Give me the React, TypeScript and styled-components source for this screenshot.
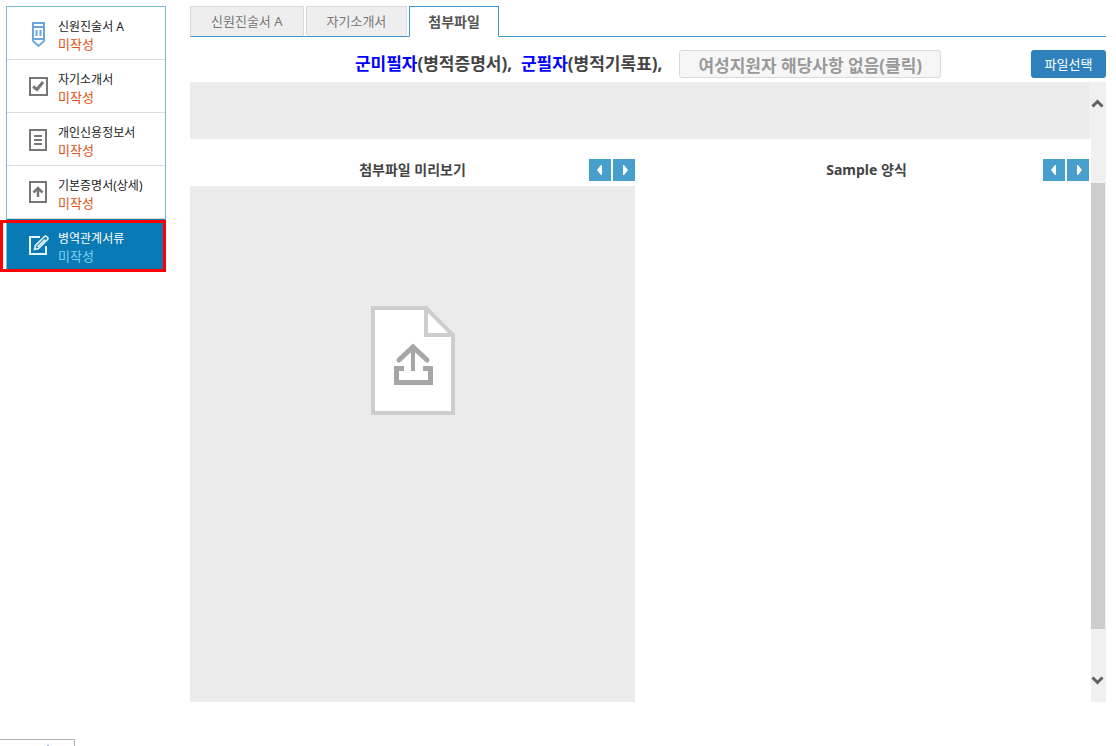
import React from 'react';
import styled, { createGlobalStyle } from 'styled-components';

const GlobalStyle = createGlobalStyle`
  * { box-sizing: border-box; }
  body {
    margin: 0;
    background: #fff;
    color: #444;
    font-family: 'Noto Sans', 'Noto Sans CJK KR', sans-serif;
    font-size: 13px;
    line-height: 18px;
  }
  button { font-family: inherit; cursor: pointer; }
`;

const Page = styled.div`
  display: flex;
  align-items: flex-start;
  gap: 24px;
  padding: 6px 10px 0 6px;
`;

const Sidebar = styled.nav`
  flex: 0 0 160px;
  border: 1px solid #7bbbd9;
`;

const StepLink = styled.a<{ $active?: boolean }>`
  position: relative;
  display: flex;
  align-items: center;
  height: ${p => (p.$active ? 52 : 53)}px;
  padding-left: 21px;
  gap: 9px;
  text-decoration: none;
  color: ${p => (p.$active ? '#fff' : '#222')};
  background: ${p => (p.$active ? '#0a7ab5' : '#fff')};
  border-bottom: ${p => (p.$active ? '0' : '1px solid #dcdcdc')};

  &::after {
    content: ${p => (p.$active ? "''" : 'none')};
    position: absolute;
    inset: 1px -1px -1px -7px;
    border: 3px solid #f00;
  }
`;

const StepIcon = styled.svg`
  flex: none;
  width: 21px;
  height: 28px;
`;

const StepText = styled.span`
  display: flex;
  flex-direction: column;
  padding-top: 5px;
  white-space: nowrap;
`;

const StepName = styled.span`
  font-size: 12px;
`;

const StepStatus = styled.span<{ $active?: boolean }>`
  font-size: 13px;
  line-height: 17px;
  color: ${p => (p.$active ? '#7fd3ee' : '#e2500f')};
`;

const Main = styled.main`
  flex: 1;
  min-width: 0;
`;

const Tabs = styled.div`
  display: flex;
  gap: 2px;
  height: 31px;
  border-bottom: 1px solid #4096cb;
`;

const Tab = styled.button<{ $selected?: boolean }>`
  height: 31px;
  padding: 0 ${p => (p.$selected ? 18 : 20)}px 2px;
  border: 1px solid ${p => (p.$selected ? '#4096cb' : '#d9d9d9')};
  border-bottom-color: ${p => (p.$selected ? '#fff' : '#4096cb')};
  background: ${p => (p.$selected ? '#fff' : '#eee')};
  color: ${p => (p.$selected ? '#555' : '#777')};
  font-size: ${p => (p.$selected ? 14 : 13)}px;
  font-weight: ${p => (p.$selected ? 700 : 400)};
`;

const Toolbar = styled.div`
  display: flex;
  align-items: center;
  height: 45px;
  padding-top: 9px;
`;

const Guide = styled.div`
  flex: 1;
  display: flex;
  align-items: center;
  justify-content: center;
  padding-left: 75px;
  font-size: 17px;
  font-weight: 700;
  line-height: 30px;
  white-space: pre;
`;

const Blue = styled.span`
  color: #00f;
`;

const NotApplicable = styled.button`
  height: 28px;
  margin-left: 17px;
  padding: 0 18px;
  border: 1px solid #d9d9d9;
  border-radius: 3px;
  background: #f6f6f6;
  color: #999;
  font-size: 17px;
  font-weight: 700;
`;

const FileButton = styled.button`
  width: 75px;
  height: 28px;
  padding: 0 0 2px;
  border: 0;
  border-radius: 3px;
  background: #2e81bd;
  color: #fff;
  font-size: 13px;
`;

const Viewer = styled.div`
  display: flex;
  gap: 2px;
`;

const ViewerBody = styled.div`
  flex: 1;
  min-width: 0;
`;

const FileList = styled.div`
  height: 57px;
  background: #ebebeb;
  border-right: 0;
  box-shadow: 2px 0 0 #f0f0f0;
`;

const Columns = styled.div`
  display: grid;
  grid-template-columns: 1fr 1fr;
  gap: 9px;
`;

const PanelHead = styled.div`
  display: grid;
  grid-template-columns: 46px 1fr 46px;
  align-items: center;
  height: 47px;
  padding-top: 15px;
`;

const PanelTitle = styled.h2`
  grid-column: 2;
  margin: 0;
  text-align: center;
  font-size: 14px;
  font-weight: 700;
  line-height: 20px;
`;

const Pager = styled.div`
  display: flex;
  gap: 2px;
`;

const PageButton = styled.button`
  display: block;
  width: 22px;
  height: 22px;
  padding: 0;
  border: 0;
  background: #479fcd;

  svg { display: block; }
`;

const Preview = styled.div<{ $blank?: boolean }>`
  display: flex;
  justify-content: center;
  height: 516px;
  padding-top: 120px;
  background: ${p => (p.$blank ? '#fff' : '#ebebeb')};
`;

const Scrollbar = styled.div`
  flex: 0 0 15px;
  display: flex;
  flex-direction: column;
  padding: 14px 0;
  background: #f0f0f0;
`;

const ScrollArrow = styled.button`
  display: block;
  height: 15px;
  padding: 0;
  border: 0;
  background: transparent;

  svg { display: block; }
`;

const ScrollThumb = styled.div`
  width: 14px;
  height: 446px;
  margin: 72px 0 44px;
  background: #cdcdcd;
`;

const StatusTip = styled.div`
  width: 75px;
  height: 7px;
  margin-top: 37px;
  padding-left: 47px;
  padding-top: 5px;
  border: 1px solid #b2b2b2;
  border-width: 1px 1px 0 0;
`;

const TipMark = styled.div`
  width: 2px;
  height: 1px;
  background: #8f9fd8;
`;

const icons = {
  pencil: (
    <g fill="none" stroke="#6ba5e0" strokeWidth="2">
      <path d="M5 4h11v16H5zM5 8h11" />
      <path d="M8.500 11v6M12.500 11v6" />
      <path d="M5 20v2l5.500 5 5.500-5v-2" strokeWidth="1.800" />
    </g>
  ),
  check: (
    <g fill="none" stroke="#777">
      <path d="M2 6h17v17H2z" strokeWidth="2" />
      <path d="M5 14.500l4 3 6-7.500" strokeWidth="3" />
    </g>
  ),
  lines: (
    <g fill="none" stroke="#777" strokeWidth="2">
      <path d="M2 5h16v20H2zM6 11h8M6 15h8M6 19h8" />
    </g>
  ),
  upload: (
    <g fill="none" stroke="#777" strokeWidth="2">
      <path d="M2 4h16v20H2z" />
      <path d="M10 19v-8M5.500 14.500L10 10l4.500 4.500" strokeWidth="2.500" />
    </g>
  ),
  edit: (
    <g fill="none" stroke="#e8f6ff" strokeWidth="2">
      <path d="M12 6H2v17h16v-8" />
      <path d="M6.500 18.500l1-4L16.500 5.500q1-1 2 0l1 1q1 1 0 2L10.500 17.500zM9.500 16l7.500-7.500" strokeWidth="1.600" />
    </g>
  ),
};

const steps: { name: string; icon: keyof typeof icons; active?: boolean }[] = [
  { name: '신원진술서 A', icon: 'pencil' },
  { name: '자기소개서', icon: 'check' },
  { name: '개인신용정보서', icon: 'lines' },
  { name: '기본증명서(상세)', icon: 'upload' },
  { name: '병역관계서류', icon: 'edit', active: true },
];

function PagerButtons() {
  return (
    <Pager>
      <PageButton aria-label="이전">
        <svg width="22" height="22"><path d="M13 6v10h-1l-4-5 4-5z" fill="#fff" /></svg>
      </PageButton>
      <PageButton aria-label="다음">
        <svg width="22" height="22"><path d="M10 6v10h1l4-5-4-5z" fill="#fff" /></svg>
      </PageButton>
    </Pager>
  );
}

function UploadPicture() {
  return (
    <svg width="84" height="109" viewBox="0 0 84 109" fill="none">
      <path d="M2 2h53l27 27v78H2z" fill="#fff" stroke="#cdcdcd" strokeWidth="4" />
      <path d="M55 2v27h27" stroke="#cdcdcd" strokeWidth="4" />
      <path d="M33 62.500h-7.500v14h34v-14H52" stroke="#a6a6a6" strokeWidth="5" />
      <path d="M42 65V42" stroke="#a6a6a6" strokeWidth="4" />
      <path d="M28 54l14-13 14 13" stroke="#a6a6a6" strokeWidth="5" strokeLinecap="round" />
    </svg>
  );
}

export default function App() {
  return (
    <>
      <GlobalStyle />
      <Page>
        <Sidebar>
          {steps.map(s => (
            <StepLink key={s.name} href="#" $active={s.active}>
              <StepIcon viewBox="0 0 21 28">{icons[s.icon]}</StepIcon>
              <StepText>
                <StepName>{s.name}</StepName>
                <StepStatus $active={s.active}>미작성</StepStatus>
              </StepText>
            </StepLink>
          ))}
        </Sidebar>
        <Main>
          <Tabs role="tablist">
            <Tab role="tab">신원진술서 A</Tab>
            <Tab role="tab">자기소개서</Tab>
            <Tab role="tab" aria-selected $selected>첨부파일</Tab>
          </Tabs>
          <Toolbar>
            <Guide>
              <Blue>군미필자</Blue>(병적증명서),{'  '}<Blue>군필자</Blue>(병적기록표),
              <NotApplicable>여성지원자 해당사항 없음(클릭)</NotApplicable>
            </Guide>
            <FileButton>파일선택</FileButton>
          </Toolbar>
          <Viewer>
            <ViewerBody>
              <FileList />
              <Columns>
                <section>
                  <PanelHead>
                    <PanelTitle>첨부파일 미리보기</PanelTitle>
                    <PagerButtons />
                  </PanelHead>
                  <Preview><UploadPicture /></Preview>
                </section>
                <section>
                  <PanelHead>
                    <PanelTitle>Sample 양식</PanelTitle>
                    <PagerButtons />
                  </PanelHead>
                  <Preview $blank />
                </section>
              </Columns>
            </ViewerBody>
            <Scrollbar>
              <ScrollArrow aria-label="위로">
                <svg width="15" height="15"><path d="M1.500 10.500l5-5 5 5" fill="none" stroke="#606060" strokeWidth="3" /></svg>
              </ScrollArrow>
              <ScrollThumb />
              <ScrollArrow aria-label="아래로">
                <svg width="15" height="15"><path d="M1.500 4.500l5 5 5-5" fill="none" stroke="#606060" strokeWidth="3" /></svg>
              </ScrollArrow>
            </Scrollbar>
          </Viewer>
        </Main>
      </Page>
      <StatusTip><TipMark /></StatusTip>
    </>
  );
}
